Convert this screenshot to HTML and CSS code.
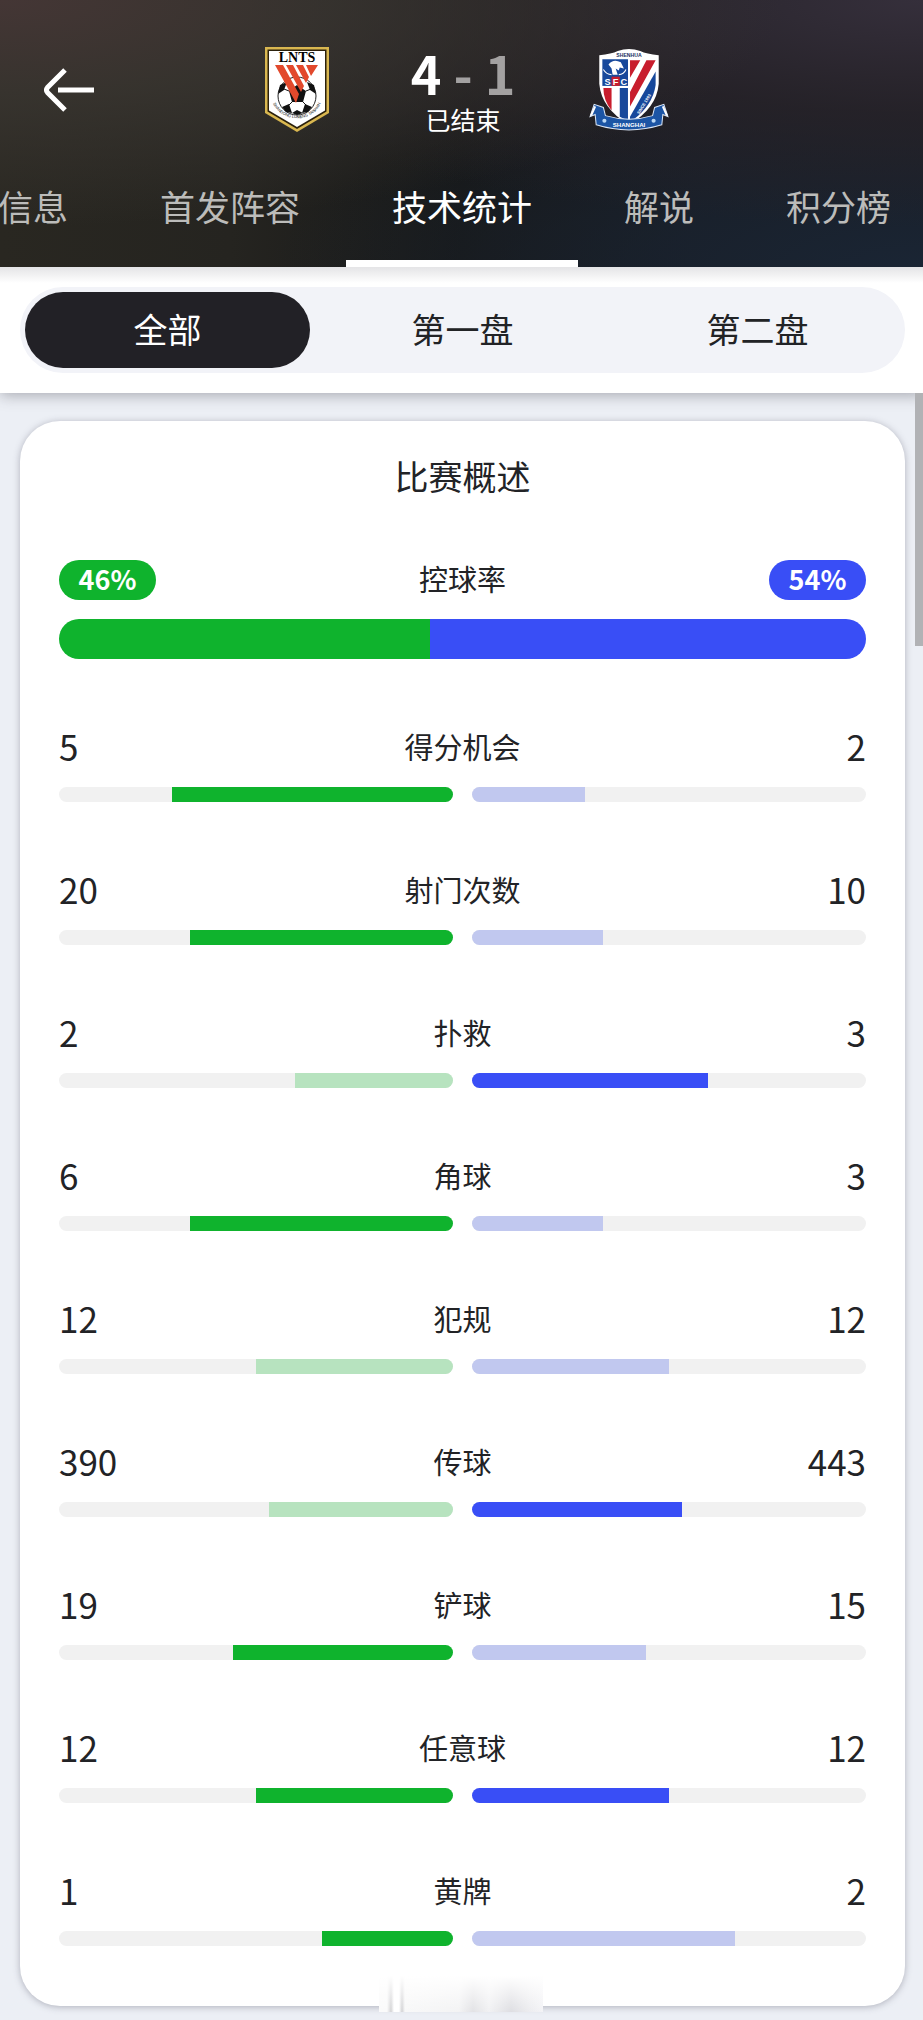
FILE: index.html
```html
<!DOCTYPE html>
<html lang="zh-CN">
<head>
  <meta charset="UTF-8">
  <meta name="viewport" content="width=device-width, initial-scale=1">
  <title>技术统计</title>
  <link rel="stylesheet" href="styles.css">
</head>
<body>
  <header class="header">
    <div class="match">
      <button type="button" class="back" aria-label="返回">
        <svg width="50" height="44" viewBox="0 0 50 44" fill="none" stroke="#fff" stroke-width="5">
          <path d="M21 2 3.500 19.500Q1.500 22 3.500 24.500L21 42M14 22H50"/>
        </svg>
      </button>

      <div class="teams">
        <svg class="crest" width="66" height="88" viewBox="0 0 66 88">
          <path d="M1 1H65V67L33 86 1 67Z" fill="#d9b750"/>
          <path d="M3.500 3.500H62.500V65.500L33 83 3.500 65.500Z" fill="#2b210c"/>
          <path d="M5 5H61V64.500L33 81 5 64.500Z" fill="#fff"/>
          <circle cx="33" cy="50" r="19" fill="#fff" stroke="#222" stroke-width="1"/>
          <path d="M25 45 33 39 42 45 39 56H28ZM14 48 16 39 23 36 20 44ZM52 48 50 39 43 36 46 44ZM18 61 25 58 28 67 22 66ZM48 61 41 58 38 67 44 66ZM28 67 33 64 39 67 33 69Z" fill="#111"/>
          <path d="M25 45 20 43M42 45 47 43M28 56 24 60M39 56 43 60" stroke="#111" stroke-width="1"/>
          <path d="M11 19H19L35 48 32 57ZM22 19H29L40 40 37 46ZM32 19H39L45 31 42 37ZM42 19H54L47 30Z" fill="#e2492c"/>
          <text x="33" y="16" class="crest-name">LNTS</text>
          <path id="lnArc" d="M7 49C10 80 56 80 59 49" fill="none"/>
          <text class="crest-small"><textPath href="#lnArc" startOffset="50%">SHANDONG LUNENG TAISHAN</textPath></text>
        </svg>

        <div class="result">
          <div class="score"><span>4</span><span class="muted">-</span><span class="muted">1</span></div>
          <div class="status">已结束</div>
        </div>

        <svg class="crest" width="80" height="82" viewBox="0 0 78 80">
          <path d="M10 6Q22 5 28 2 39-2 50 2 56 5 68 6V34Q66 58 39 74 12 58 10 34Z" fill="#fff"/>
          <path d="M13 10H38V36H13Z" fill="#17489b"/>
          <path d="M14 38H22V60Q14 50 14 38Z" fill="#c81d2d"/>
          <path d="M30 38H38V70L30 66Z" fill="#17489b"/>
          <path d="M22 27H30V36H22Z" fill="#c81d2d"/>
          <path d="M40 11H50L40 28ZM56 11H65L40 56V42Z" fill="#c81d2d"/>
          <path d="M65 22V35Q62 55 43 69H40V66Z" fill="#17489b"/>
          <path d="M19 15Q24 9 31 13L34 19 30 18 29 21 26 19 28 25H23L22 19Z" fill="#fff"/>
          <path d="M14 20Q17 25 22 25M36 20Q34 25 29 25" fill="none" stroke="#fff"/>
          <path d="M1 66 5 54 14 57 16 65Q39 72 62 65L64 57 73 54 77 66 72 64 71 74Q39 84 7 74L6 64Z" fill="#1c55a5" stroke="#dce7f6" stroke-width="1"/>
          <path d="M2 65 6 56M76 65 72 56" stroke="#fff" stroke-width="2"/>
          <circle cx="15" cy="70" r="2" fill="#bcd9f5"/>
          <circle cx="63" cy="70" r="2" fill="#bcd9f5"/>
          <text x="39" y="8" class="crest-top">SHENHUA</text>
          <text x="18" y="35" class="crest-sfc">S</text>
          <text x="26" y="35" class="crest-sfc">F</text>
          <text x="34" y="35" class="crest-sfc">C</text>
          <text x="39" y="76" class="crest-city">SHANGHAI</text>
          <path id="since" d="M49 64 63 41" fill="none"/>
          <text class="crest-since"><textPath href="#since">SINCE 1993</textPath></text>
        </svg>
      </div>
    </div>

    <nav class="tabs">
      <a href="#" class="tab">信息</a>
      <a href="#" class="tab">首发阵容</a>
      <a href="#" class="tab active">技术统计</a>
      <a href="#" class="tab">解说</a>
      <a href="#" class="tab">积分榜</a>
    </nav>
  </header>

  <div class="filter">
    <div class="segments">
      <button type="button" class="segment selected">全部</button>
      <button type="button" class="segment">第一盘</button>
      <button type="button" class="segment">第二盘</button>
    </div>
  </div>

  <main class="content">
    <div class="scrollbar"></div>
    <section class="card">
      <h1>比赛概述</h1>

      <div class="stats">
        <div class="stat">
          <div class="values">
            <span class="pill home">46%</span>
            <span class="name">控球率</span>
            <span class="pill away">54%</span>
          </div>
          <div class="possession">
            <div class="home" style="width: 46%"></div>
            <div class="away" style="width: 54%"></div>
          </div>
        </div>

        <div class="stat">
          <div class="values"><span>5</span><span class="name">得分机会</span><span>2</span></div>
          <div class="bars">
            <div class="track left"><div class="fill home" style="width: 71.4%"></div></div>
            <div class="track"><div class="fill away-light" style="width: 28.6%"></div></div>
          </div>
        </div>

        <div class="stat">
          <div class="values"><span>20</span><span class="name">射门次数</span><span>10</span></div>
          <div class="bars">
            <div class="track left"><div class="fill home" style="width: 66.7%"></div></div>
            <div class="track"><div class="fill away-light" style="width: 33.3%"></div></div>
          </div>
        </div>

        <div class="stat">
          <div class="values"><span>2</span><span class="name">扑救</span><span>3</span></div>
          <div class="bars">
            <div class="track left"><div class="fill home-light" style="width: 40%"></div></div>
            <div class="track"><div class="fill away" style="width: 60%"></div></div>
          </div>
        </div>

        <div class="stat">
          <div class="values"><span>6</span><span class="name">角球</span><span>3</span></div>
          <div class="bars">
            <div class="track left"><div class="fill home" style="width: 66.7%"></div></div>
            <div class="track"><div class="fill away-light" style="width: 33.3%"></div></div>
          </div>
        </div>

        <div class="stat">
          <div class="values"><span>12</span><span class="name">犯规</span><span>12</span></div>
          <div class="bars">
            <div class="track left"><div class="fill home-light" style="width: 50%"></div></div>
            <div class="track"><div class="fill away-light" style="width: 50%"></div></div>
          </div>
        </div>

        <div class="stat">
          <div class="values"><span>390</span><span class="name">传球</span><span>443</span></div>
          <div class="bars">
            <div class="track left"><div class="fill home-light" style="width: 46.8%"></div></div>
            <div class="track"><div class="fill away" style="width: 53.2%"></div></div>
          </div>
        </div>

        <div class="stat">
          <div class="values"><span>19</span><span class="name">铲球</span><span>15</span></div>
          <div class="bars">
            <div class="track left"><div class="fill home" style="width: 55.9%"></div></div>
            <div class="track"><div class="fill away-light" style="width: 44.1%"></div></div>
          </div>
        </div>

        <div class="stat">
          <div class="values"><span>12</span><span class="name">任意球</span><span>12</span></div>
          <div class="bars">
            <div class="track left"><div class="fill home" style="width: 50%"></div></div>
            <div class="track"><div class="fill away" style="width: 50%"></div></div>
          </div>
        </div>

        <div class="stat">
          <div class="values"><span>1</span><span class="name">黄牌</span><span>2</span></div>
          <div class="bars">
            <div class="track left"><div class="fill home" style="width: 33.3%"></div></div>
            <div class="track"><div class="fill away-light" style="width: 66.7%"></div></div>
          </div>
        </div>
      </div>
      <div class="smudge"></div>
    </section>
  </main>
</body>
</html>
```
FILE: styles.css
```css
* {
  box-sizing: border-box;
}
body {
  margin: 0;
  background: #eceff5;
  color: #222326;
  font-family: "Noto Sans CJK SC", sans-serif;
}
button {
  padding: 0;
  border: none;
  background: none;
  color: inherit;
  font: inherit;
  cursor: pointer;
}

/* header */
.header {
  position: relative;
  z-index: 1;
  overflow: hidden;
  color: #fff;
  background:
    radial-gradient(ellipse at 0% 0%, #443635 0%, rgba(58, 54, 49, 0.8) 25%, rgba(34, 32, 28, 0) 60%),
    radial-gradient(ellipse at 100% 0%, #352f3b 0%, rgba(42, 36, 42, 0.7) 30%, rgba(30, 28, 28, 0) 60%),
    radial-gradient(ellipse at 100% 100%, #1a2534 0%, rgba(26, 34, 46, 0) 50%),
    linear-gradient(90deg, #292721 0%, #252420 25%, #171818 50%, #181b21 75%);
}
.match {
  display: grid;
  grid-template-columns: 1fr auto 1fr;
  align-items: center;
  height: 149px;
  padding-top: 31px;
}
.back {
  justify-self: start;
  height: 44px;
  margin-left: 44px;
}
.teams {
  display: grid;
  grid-template-columns: 80px 252px 80px;
  align-items: center;
  justify-items: center;
  margin-left: 3px;
}
.crest {
  display: block;
}
.crest text {
  text-anchor: middle;
  font-family: "Liberation Sans", sans-serif;
  font-weight: bold;
}
.crest .crest-name {
  font-family: "Liberation Serif", serif;
  font-size: 14px;
}
.crest .crest-small {
  font-size: 4px;
  font-weight: normal;
}
.crest .crest-top {
  font-size: 5px;
  fill: #17305f;
}
.crest .crest-sfc {
  font-size: 9px;
  fill: #fff;
}
.crest .crest-city {
  font-size: 6px;
  fill: #fff;
}
.crest .crest-since {
  font-size: 4px;
  fill: #fff;
  text-anchor: start;
}
.score {
  display: flex;
  justify-content: center;
  gap: 12px;
  font-size: 52px;
  font-weight: bold;
  line-height: 54px;
}
.muted {
  color: #a3a1a1;
}
.status {
  margin-top: 4px;
  font-size: 25px;
  line-height: 30px;
  text-align: center;
}

.tabs {
  display: flex;
  margin-left: -48px;
}
.tab {
  flex: none;
  height: 118px;
  padding: 0 46px;
  border-bottom: 7px solid transparent;
  color: #bcbcba;
  font-size: 35px;
  line-height: 114px;
  text-decoration: none;
}
.tab.active {
  border-color: #fff;
  color: #fff;
}

/* filter */
.filter {
  position: relative;
  padding: 20px 18px 20px 20px;
  background: linear-gradient(#e4e4e6, #fff 16px);
  box-shadow: 0 2px 14px rgba(60, 60, 70, 0.4);
}
.segments {
  display: grid;
  grid-template-columns: 1fr 1fr 1fr;
  gap: 10px;
  height: 86px;
  padding: 5px;
  border-radius: 43px;
  background: #f2f3f8;
}
.segment {
  padding-bottom: 4px;
  border-radius: 38px;
  font-size: 34px;
}
.segment.selected {
  background: #222126;
  color: #fff;
}

/* card */
.content {
  position: relative;
  padding: 28px 18px 14px 20px;
}
.scrollbar {
  position: absolute;
  top: 0;
  right: 0;
  width: 8px;
  height: 253px;
  background: #b1b2b5;
}
.card {
  position: relative;
  padding: 33px 39px 60px;
  border-radius: 40px;
  background: #fff;
  box-shadow: 0 1px 7px rgba(60, 60, 80, 0.35);
}
h1 {
  margin: 0 0 62px;
  font-size: 34px;
  font-weight: normal;
  line-height: 44px;
  text-align: center;
}
.stats {
  display: flex;
  flex-direction: column;
  gap: 69px;
}
.values {
  display: grid;
  grid-template-columns: 1fr auto 1fr;
  height: 40px;
  margin-bottom: 19px;
  font-size: 35px;
  line-height: 36px;
}
.values > :last-child {
  justify-self: end;
}
.name {
  font-size: 29px;
}
.pill {
  justify-self: start;
  width: 97px;
  border-radius: 20px;
  color: #fff;
  font-size: 27px;
  font-weight: bold;
  line-height: 38px;
  text-align: center;
}
.possession {
  display: flex;
  height: 40px;
  overflow: hidden;
  border-radius: 20px;
}
.bars {
  display: grid;
  grid-template-columns: 1fr 1fr;
  gap: 19px;
}
.track {
  display: flex;
  height: 15px;
  overflow: hidden;
  border-radius: 8px;
  background: #f1f1f1;
}
.track.left {
  justify-content: flex-end;
}
.home {
  background: #0fb32d;
}
.home-light {
  background: #b7e3bf;
}
.away {
  background: #394ef6;
}
.away-light {
  background: #c1c8ef;
}
.smudge {
  position: absolute;
  bottom: -6px;
  left: 50%;
  width: 164px;
  height: 36px;
  margin-left: -84px;
  background:
    linear-gradient(#fff, rgba(255, 255, 255, 0)),
    linear-gradient(90deg, #fafafa 0, #fafafa 8px, #d2d2d4 12px, #fff 15px, #fff 20px, #d2d2d4 23px, #f8f8f8 26px, #f3f3f4 80px, #e2e2e5 94px, #f1f1f3 110px, #dedee2 132px, #ececef 150px, #f3f3f6 164px);
}
```
